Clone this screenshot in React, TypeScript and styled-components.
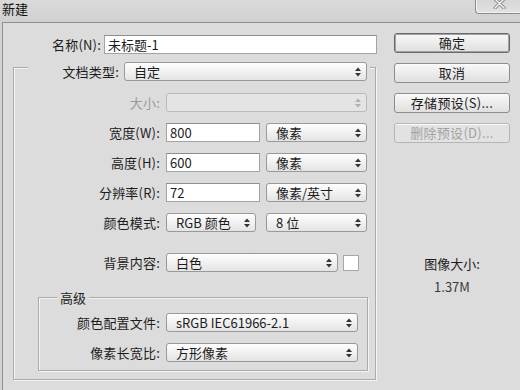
import styled, { createGlobalStyle } from 'styled-components'

const GlobalStyle = createGlobalStyle`
  html, body {
    margin: 0;
    padding: 0;
  }
  body {
    width: 520px;
    height: 390px;
    overflow: hidden;
    background: #d2d2d2;
    font-family: "Noto Sans CJK SC", "Liberation Sans", sans-serif;
    font-size: 13px;
    color: #1c1c1c;
  }
  * {
    box-sizing: border-box;
  }
`

const Window = styled.div`
  width: 520px;
  height: 390px;
  display: flex;
  flex-direction: column;
  background: #d2d2d2;
  overflow: hidden;
`

const TitleBar = styled.div`
  height: 22px;
  display: flex;
  justify-content: space-between;
  align-items: flex-start;
  background: linear-gradient(180deg, #dadada 0%, #d0d0d0 100%);
`

const Title = styled.div`
  padding: 1px 0 0 2px;
  line-height: 16px;
  color: #111;
`

const CloseButton = styled.div`
  width: 45px;
  height: 14px;
  display: flex;
  justify-content: center;
  padding-left: 3px;
  border: 1px solid #8c8c8c;
  border-top: none;
  border-right: none;
  border-bottom-left-radius: 4px;
  background: linear-gradient(180deg, #d6d6d6 0%, #e2e2e2 100%);
  box-shadow: inset 1px -1px 0 #f2f2f2;
`

const Frame = styled.div`
  flex: 1;
  display: flex;
  padding-left: 2px;
`

const Client = styled.div`
  flex: 1;
  display: flex;
  border-left: 1px solid #8f8f8f;
  border-top: 1px solid #8f8f8f;
  background: #dcdcdc;
`

const Main = styled.div`
  width: 391px;
  display: flex;
  flex-direction: column;
`

const Side = styled.div`
  width: 116px;
  display: flex;
  flex-direction: column;
  padding-top: 10px;
`

const Row = styled.div<{ $mt?: number }>`
  display: flex;
  align-items: center;
  gap: 6px;
  height: 19px;
  margin-top: ${p => p.$mt ?? 0}px;
`

const Label = styled.label<{ $w: number; $disabled?: boolean }>`
  width: ${p => p.$w}px;
  flex: none;
  text-align: right;
  line-height: 19px;
  white-space: nowrap;
  letter-spacing: 0.2px;
  color: ${p => (p.$disabled ? '#9a9a9a' : '#1c1c1c')};
`

const NameRow = styled(Row)`
  margin-top: 12px;
  gap: 3px;
`

const TextInput = styled.input<{ $w: number }>`
  width: ${p => p.$w}px;
  height: 19px;
  flex: none;
  margin: 0;
  padding: 0 0 0 3px;
  border: 1px solid #a3a3a3;
  border-top-color: #8e8e8e;
  background: #fff;
  font: inherit;
  color: #1c1c1c;
  outline: none;
`

const SelectBox = styled.div<{ $w: number; $ml?: number; $disabled?: boolean }>`
  width: ${p => p.$w}px;
  height: 19px;
  flex: none;
  margin-left: ${p => p.$ml ?? 0}px;
  display: flex;
  align-items: center;
  justify-content: space-between;
  padding: 0 5px 0 9px;
  border: 1px solid ${p => (p.$disabled ? '#bababa' : '#999')};
  border-radius: 3px;
  background: ${p =>
    p.$disabled ? '#e4e4e4' : 'linear-gradient(180deg, #fefefe 0%, #f1f1f1 50%, #e4e4e4 100%)'};
  white-space: nowrap;
  line-height: 17px;
`

const Arrows = styled.svg`
  flex: none;
`

const Swatch = styled.div`
  width: 16px;
  height: 16px;
  flex: none;
  margin-left: -1px;
  background: #fff;
  border: 1px solid #a6a6a6;
`

const GroupBox = styled.div`
  margin: 13px 0 0 10px;
  width: 363px;
  padding-bottom: 8px;
  border: 1px solid #ababab;
  box-shadow: inset 1px 1px 0 #f4f4f4, 1px 1px 0 #f4f4f4;
`

const GroupHeader = styled.div`
  display: flex;
  align-items: center;
  gap: 5px;
  width: 342px;
  height: 19px;
  margin: -6px 0 0 14px;
  padding-right: 3px;
  background: #dcdcdc;
`

const Fields = styled.div`
  display: flex;
  flex-direction: column;
  gap: 11px;
  margin-top: 12px;
`

const InnerGroup = styled.div`
  margin: 25px 0 0 24px;
  width: 330px;
  padding-bottom: 8px;
  border: 1px solid #ababab;
  box-shadow: inset 1px 1px 0 #f4f4f4, 1px 1px 0 #f4f4f4;
  display: flex;
  flex-direction: column;
  gap: 11px;
`

const Legend = styled.div`
  align-self: flex-start;
  margin: -8px 0 -4px 18px;
  padding: 0 3px;
  line-height: 16px;
  background: #dcdcdc;
`

const Button = styled.div<{ $default?: boolean; $disabled?: boolean }>`
  height: 20px;
  display: flex;
  align-items: center;
  justify-content: center;
  border: 1px solid ${p => (p.$default ? '#6a6a6a' : p.$disabled ? '#b6b6b6' : '#8d8d8d')};
  border-radius: 3px;
  background: ${p =>
    p.$disabled ? '#e2e2e2' : 'linear-gradient(180deg, #f8f8f8 0%, #ececec 50%, #dfdfdf 100%)'};
  box-shadow: ${p => (p.$default ? 'inset 0 0 0 1px #a2a2a2' : 'inset 0 1px 0 #fcfcfc')};
  color: ${p => (p.$disabled ? '#a2a2a2' : '#1c1c1c')};
  line-height: 18px;
  letter-spacing: 0.3px;
  white-space: nowrap;
`

const ButtonStack = styled.div`
  display: flex;
  flex-direction: column;
  gap: 10px;
`

const Info = styled.div`
  margin-top: 113px;
  display: flex;
  flex-direction: column;
  align-items: center;
  gap: 7px;
  line-height: 16px;
`

const InfoValue = styled.div`
  color: #3a3a3a;
`

function UpDown({ disabled }: { disabled?: boolean }) {
  const c = disabled ? '#b0b0b0' : '#333'
  return (
    <Arrows width="6" height="10" viewBox="0 0 6 10">
      <polygon points="0,4 3,0.5 6,4" fill={c} />
      <polygon points="0,6 3,9.5 6,6" fill={c} />
    </Arrows>
  )
}

function Select({ w, ml, value, disabled }: { w: number; ml?: number; value?: string; disabled?: boolean }) {
  return (
    <SelectBox $w={w} $ml={ml} $disabled={disabled}>
      <span>{value}</span>
      <UpDown disabled={disabled} />
    </SelectBox>
  )
}

export default function App() {
  return (
    <>
      <GlobalStyle />
      <Window>
        <TitleBar>
          <Title>新建</Title>
          <CloseButton>
            <svg width="13" height="9" viewBox="0 0 13 9">
              <path d="M2 -1 L11 8 M11 -1 L2 8" stroke="#8a8a8a" strokeWidth="3.2" strokeLinecap="round" />
              <path d="M2 -1 L11 8 M11 -1 L2 8" stroke="#f4f4f4" strokeWidth="1.4" strokeLinecap="round" />
            </svg>
          </CloseButton>
        </TitleBar>
        <Frame>
          <Client>
            <Main>
              <NameRow>
                <Label $w={98}>名称(N):</Label>
                <TextInput $w={273} defaultValue="未标题-1" />
              </NameRow>

              <GroupBox>
                <GroupHeader>
                  <Label $w={91}>文档类型:</Label>
                  <Select w={243} value="自定" />
                </GroupHeader>

                <Fields>
                  <Row>
                    <Label $w={146} $disabled>大小:</Label>
                    <Select w={201} disabled />
                  </Row>
                  <Row>
                    <Label $w={146}>宽度(W):</Label>
                    <TextInput $w={94} defaultValue="800" />
                    <Select w={101} value="像素" />
                  </Row>
                  <Row>
                    <Label $w={146}>高度(H):</Label>
                    <TextInput $w={94} defaultValue="600" />
                    <Select w={101} value="像素" />
                  </Row>
                  <Row>
                    <Label $w={146}>分辨率(R):</Label>
                    <TextInput $w={94} defaultValue="72" />
                    <Select w={101} value="像素/英寸" />
                  </Row>
                  <Row>
                    <Label $w={146}>颜色模式:</Label>
                    <Select w={90} value="RGB 颜色" />
                    <Select w={101} ml={4} value="8 位" />
                  </Row>
                  <Row $mt={10}>
                    <Label $w={146}>背景内容:</Label>
                    <Select w={172} value="白色" />
                    <Swatch />
                  </Row>
                </Fields>

                <InnerGroup>
                  <Legend>高级</Legend>
                  <Row>
                    <Label $w={121}>颜色配置文件:</Label>
                    <Select w={192} value="sRGB IEC61966-2.1" />
                  </Row>
                  <Row>
                    <Label $w={121}>像素长宽比:</Label>
                    <Select w={192} value="方形像素" />
                  </Row>
                </InnerGroup>
              </GroupBox>
            </Main>

            <Side>
              <ButtonStack>
                <Button $default>确定</Button>
                <Button>取消</Button>
                <Button>存储预设(S)...</Button>
                <Button $disabled>删除预设(D)...</Button>
              </ButtonStack>
              <Info>
                <div>图像大小:</div>
                <InfoValue>1.37M</InfoValue>
              </Info>
            </Side>
          </Client>
        </Frame>
      </Window>
    </>
  )
}
